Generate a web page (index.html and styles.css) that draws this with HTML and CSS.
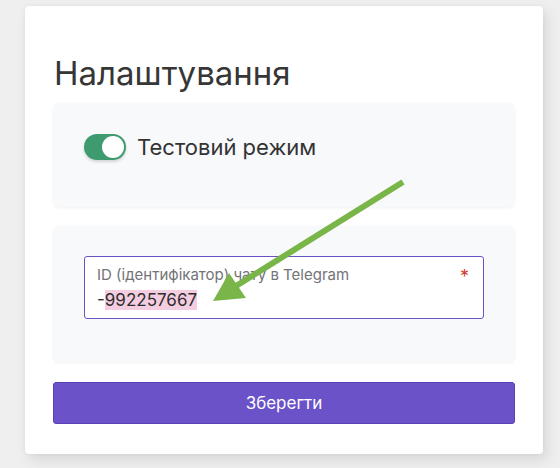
FILE: index.html
```html
<!DOCTYPE html>
<html lang="uk">
<head>
<meta charset="utf-8">
<link rel="stylesheet" href="styles.css">
</head>
<body>
<div class="card">
  <h1 class="title">Налаштування</h1>
  <div class="panel panel-toggle">
    <label class="switch-row">
      <span class="switch"><span class="knob"></span></span>
      <span class="switch-label">Тестовий режим</span>
    </label>
  </div>
  <div class="panel panel-field">
    <div class="field">
      <div class="field-top">
        <span class="field-label">ID (ідентифікатор) чату в Telegram</span>
        <span class="req">*</span>
      </div>
      <div class="field-value">-<span class="sel">992257667</span></div>
    </div>
  </div>
  <button class="btn">Зберегти</button>
</div>
<svg class="arrow" width="560" height="468" viewBox="0 0 560 468">
  <line x1="403" y1="182" x2="236" y2="286" stroke="#79b548" stroke-width="6"/>
  <polygon points="213,301 229,273 246,298" fill="#79b548"/>
</svg>
</body>
</html>
```
FILE: styles.css
```css
html, body {
  margin: 0;
  padding: 0;
}
body {
  width: 560px;
  height: 468px;
  background: #efefef;
  font-family: Inter, "Liberation Sans", sans-serif;
  position: relative;
  overflow: hidden;
}
.card {
  margin: 6px 0 0 25px;
  width: 518px;
  height: 448px;
  box-sizing: border-box;
  background: #fff;
  border-radius: 4px;
  box-shadow: 4px 6px 14px rgba(0,0,0,0.10), 0 0 4px rgba(0,0,0,0.05);
  padding: 0 28px;
  display: flex;
  flex-direction: column;
}
.title {
  margin: 45px 0 0 1px;
  font-size: 33px;
  line-height: 44px;
  font-weight: 400;
  color: #363636;
  height: 52px;
}
.panel {
  background: #f8f9fa;
  border-radius: 6px;
  box-shadow: 0 1px 3px rgba(0,0,0,0.06);
}
.panel-toggle {
  height: 104px;
  box-sizing: border-box;
  padding: 30px 31px 0;
}
.switch-row {
  display: flex;
  align-items: center;
  gap: 11px;
}
.switch {
  width: 42px;
  height: 26px;
  border-radius: 13px;
  background: #3e9b70;
  position: relative;
  box-sizing: border-box;
  box-shadow: 0 2px 3px rgba(0,0,0,0.15);
}
.knob {
  position: absolute;
  right: 2px;
  top: 2px;
  width: 22px;
  height: 22px;
  border-radius: 50%;
  background: #fff;
}
.switch-label {
  font-size: 22px;
  color: #333;
  line-height: 28px;
}
.panel-field {
  margin-top: 19px;
  height: 136px;
  box-sizing: border-box;
  padding: 30px 31px 0;
}
.field {
  height: 63px;
  box-sizing: border-box;
  border: 1px solid #6a52c5;
  border-radius: 3px;
  background: #fff;
  padding: 9px 12px 0 12px;
}
.field-top {
  display: flex;
  justify-content: space-between;
  align-items: flex-start;
}
.field-label {
  font-size: 15px;
  line-height: 18px;
  color: #737377;
}
.req {
  color: #d33a2c;
  font-size: 18px;
  line-height: 18px;
  margin-right: 2px;
  margin-top: 2px;
}
.field-value {
  font-size: 17px;
  line-height: 22px;
  color: #2e2e2e;
  margin-top: 3px;
}
.sel {
  background: #f4cde1;
}
.btn {
  margin-top: 20px;
  height: 42px;
  width: 100%;
  border: 1px solid #5a40b5;
  border-radius: 3px;
  background: #6c52c9;
  color: #fff;
  font-family: inherit;
  font-size: 17px;
  cursor: pointer;
}
.arrow {
  position: absolute;
  left: 0;
  top: 0;
  pointer-events: none;
}
```
